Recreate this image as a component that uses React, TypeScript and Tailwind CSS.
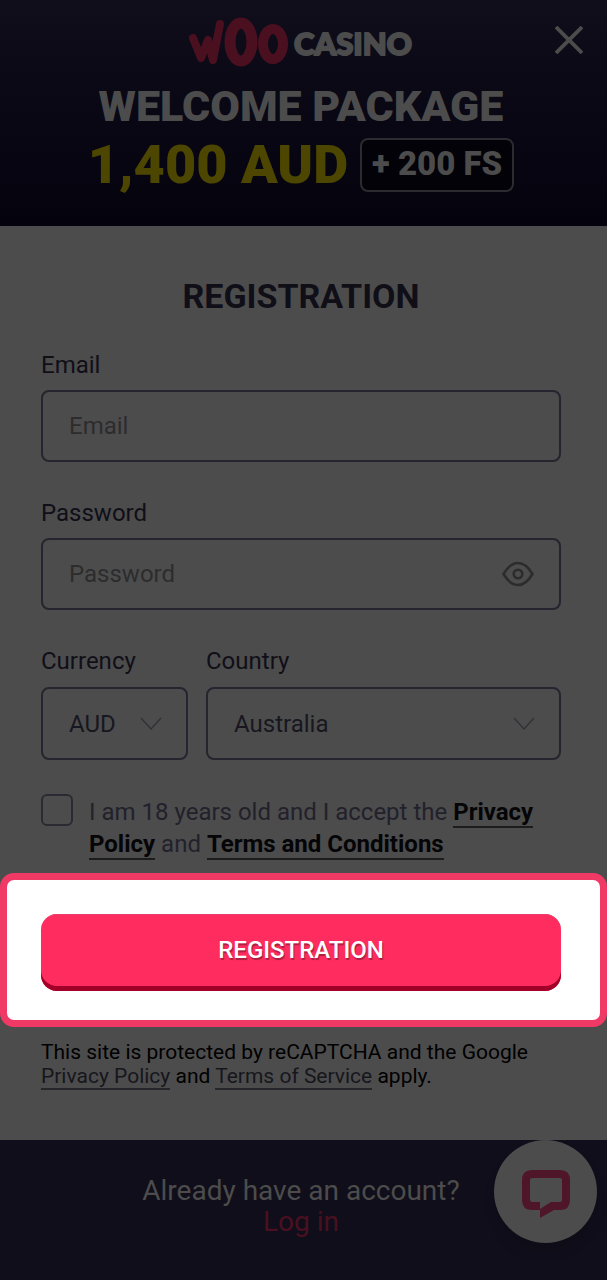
import { useState } from "react";
import type { ReactNode } from "react";

const currencies = ["AUD", "USD", "EUR", "NZD"];
const countries = ["Australia", "Canada", "Germany", "New Zealand"];

const fieldClass =
  "block w-full rounded-lg border-2 border-[#25242f] bg-transparent px-[26px] text-2xl font-normal outline-none";

function Logo() {
  return (
    <svg
      viewBox="0 0 224 50"
      className="w-[224px] h-[50px]"
      role="img"
      aria-label="Woo Casino"
      fontFamily="Lato, sans-serif"
      fontWeight="900"
      strokeLinejoin="round"
    >
      {/* hand-drawn W and the two rings */}
      <g fill="none" stroke="#4b1020" strokeLinecap="round">
        <path d="M4 21 L12 41 L19 23 L24 43 L31 7" strokeWidth="8" />
        <ellipse cx="52" cy="25" rx="11" ry="19" strokeWidth="11" />
        <ellipse cx="84" cy="27" rx="10" ry="15" strokeWidth="10" />
      </g>
      <text x="105" y="38" fontSize="31" fill="#4c4c4c" stroke="#4c4c4c" strokeWidth="2">
        CASINO
      </text>
    </svg>
  );
}

function SelectField({
  id,
  label,
  options,
  className,
}: {
  id: string;
  label: string;
  options: string[];
  className: string;
}) {
  return (
    <div className={className}>
      <label htmlFor={id} className="block mb-2.5 text-2xl leading-8">
        {label}
      </label>
      <div className="relative">
        <select id={id} className={`${fieldClass} h-[73px] appearance-none text-[#18171f]`}>
          {options.map((option) => (
            <option key={option}>{option}</option>
          ))}
        </select>
        <svg
          viewBox="0 0 22 14"
          className="pointer-events-none absolute right-[26px] top-[30px] w-[22px] h-[14px]"
          fill="none"
          stroke="#303036"
          strokeWidth="1.2"
        >
          <path d="M1 1 L11 12 L21 1" />
        </svg>
      </div>
    </div>
  );
}

function TextLink({ className, children }: { className: string; children: ReactNode }) {
  return (
    <a href="#" className={`border-b-2 ${className}`}>
      {children}
    </a>
  );
}

export default function App() {
  const [showPassword, setShowPassword] = useState(false);

  return (
    <div className="relative min-h-screen flex flex-col bg-[#4c4c4c] font-[Roboto,sans-serif] text-[#100f18]">
      {/* Promo header */}
      <header className="relative flex flex-col items-center bg-linear-to-b from-[#100e1b] to-[#04030d] pt-[17px] pb-[34px] pr-[5px] text-[#4c4c4c]">
        <Logo />
        <button
          type="button"
          aria-label="Close"
          className="absolute right-6 top-[26px] w-7 h-7 text-[#4c4c4c]"
        >
          <svg viewBox="0 0 28 28" fill="none" stroke="currentColor" strokeWidth="3.8">
            <path d="M1 1 L27 27 M27 1 L1 27" />
          </svg>
        </button>
        <h2 className="mt-[19px] text-[43px] leading-10 font-black whitespace-nowrap">
          WELCOME PACKAGE
        </h2>
        <div className="mt-3 flex items-center gap-3 whitespace-nowrap">
          <span className="text-[54px] leading-[54px] font-black text-[#4d4600]">1,400 AUD</span>
          <span className="h-[54px] rounded-lg border-2 border-[#2b2b30] bg-[#020208] px-2.5 text-[33px] leading-12 font-black">
            + 200 FS
          </span>
        </div>
      </header>

      <form onSubmit={(e) => e.preventDefault()}>
        <div className="pt-[50px] pl-[41px] pr-[46px]">
          <h1 className="text-center text-[34px] leading-10 font-bold">REGISTRATION</h1>

          <div className="mt-[33px]">
            <label htmlFor="email" className="block mb-[9px] text-2xl leading-8">
              Email
            </label>
            <input
              id="email"
              type="email"
              placeholder="Email"
              className={`${fieldClass} h-18 placeholder:text-[#2c2c2e]`}
            />
          </div>

          <div className="mt-[35px]">
            <label htmlFor="password" className="block mb-[9px] text-2xl leading-8">
              Password
            </label>
            <div className="relative">
              <input
                id="password"
                type={showPassword ? "text" : "password"}
                placeholder="Password"
                className={`${fieldClass} h-18 placeholder:text-[#2c2c2e]`}
              />
              <button
                type="button"
                aria-label="Show password"
                onClick={() => setShowPassword(!showPassword)}
                className="absolute right-[27px] top-[23px] w-8 h-[26px] text-[#2c2c2e]"
              >
                <svg viewBox="0 0 32 26" fill="none" stroke="currentColor" strokeWidth="2.6">
                  <path
                    d="M1.5 13 Q8 2 16 2 Q24 2 30.5 13 Q24 24 16 24 Q8 24 1.5 13 Z"
                    strokeLinejoin="round"
                  />
                  <circle cx="16" cy="13" r="4.3" />
                </svg>
              </button>
            </div>
          </div>

          <div className="mt-[35px] flex gap-[18px]">
            <SelectField id="currency" label="Currency" options={currencies} className="w-[147px]" />
            <SelectField id="country" label="Country" options={countries} className="flex-1" />
          </div>

          <div className="mt-[34px] mb-[13px] flex gap-4">
            <input
              id="terms"
              type="checkbox"
              className="shrink-0 appearance-none w-8 h-8 rounded-md border-2 border-[#2b2a33] checked:bg-[#2b2a33]"
            />
            <label htmlFor="terms" className="pt-0.5 text-2xl leading-8 text-[#22212b]">
              I am 18 years old and I accept the{" "}
              <TextLink className="font-bold text-[#050507] border-[#1c1c1f]">Privacy Policy</TextLink> and{" "}
              <TextLink className="font-bold text-[#050507] border-[#1c1c1f]">
                Terms and Conditions
              </TextLink>
            </label>
          </div>
        </div>

        {/* Highlighted submit area */}
        <div className="bg-white rounded-[14px] border-7 border-[#f03964] pt-[34px] pb-[29px] pl-[34px] pr-[39px]">
          <button
            type="submit"
            className="block w-full h-[77px] pb-[6px] rounded-2xl bg-[#ff2d5f] text-2xl font-medium text-white shadow-[inset_0_-5px_0_#a30029,inset_0_1px_0_#e8406a] text-shadow-[1px_2px_1px_#00000055]"
          >
            REGISTRATION
          </button>
        </div>

        <p className="pt-[13px] pb-[52px] pl-[41px] pr-[46px] text-[21px] leading-6 text-black">
          This site is protected by reCAPTCHA and the Google{" "}
          <TextLink className="text-[#16161c] border-[#25252a]">Privacy Policy</TextLink> and{" "}
          <TextLink className="text-[#16161c] border-[#25252a]">Terms of Service</TextLink> apply.
        </p>
      </form>

      <footer className="flex-1 bg-[#100e1a] pt-[35px] pb-10 pr-[5px] text-center text-[28px] leading-[31px] text-[#4c4c4c]">
        <p>Already have an account?</p>
        <a href="#" className="text-[#4b1020]">
          Log in
        </a>
      </footer>

      {/* Live chat */}
      <button
        type="button"
        aria-label="Open chat"
        className="absolute right-[10px] bottom-[37px] w-[103px] h-[103px] rounded-full bg-[#4c4c4c] shadow-lg"
      >
        <svg viewBox="0 0 103 103" fill="#4f1529">
          <path
            fillRule="evenodd"
            d="M38 30 H66 Q76 30 76 40 V60 Q76 70 66 70 H60 L46 78 V70 H38 Q28 70 28 60 V40 Q28 30 38 30 Z M38 38 Q36 38 36 40 V60 Q36 62 38 62 H46 V69 L57 62 H66 Q68 62 68 60 V40 Q68 38 66 38 Z"
          />
        </svg>
      </button>
    </div>
  );
}
